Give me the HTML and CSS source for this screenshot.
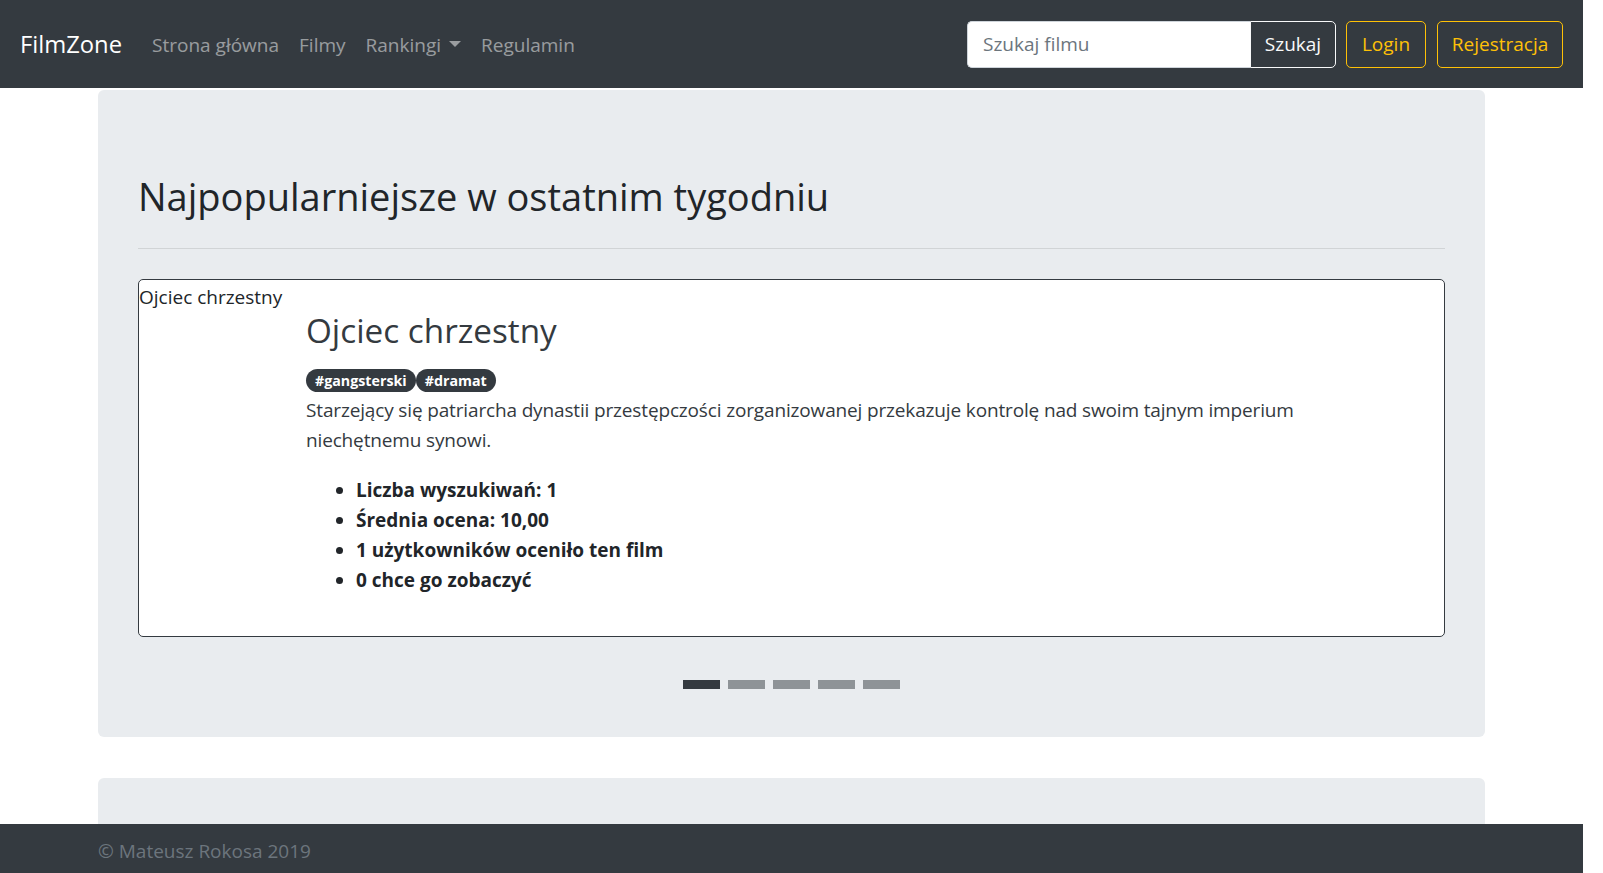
FILE: index.html
```html
<!DOCTYPE html>
<html lang="pl">
<head>
<meta charset="utf-8">
<title>FilmZone</title>
<link rel="stylesheet" href="styles.css">
</head>
<body>
<div class="page">
  <nav class="navbar">
    <div class="nav-left">
      <a class="brand" href="#">FilmZone</a>
      <ul class="nav">
        <li><a class="nav-link" href="#">Strona główna</a></li>
        <li><a class="nav-link" href="#">Filmy</a></li>
        <li><a class="nav-link" href="#">Rankingi<span class="caret"></span></a></li>
        <li><a class="nav-link" href="#">Regulamin</a></li>
      </ul>
    </div>
    <form class="nav-right">
      <div class="input-group">
        <input class="search-input" type="text" placeholder="Szukaj filmu">
        <button class="btn btn-search" type="button">Szukaj</button>
      </div>
      <button class="btn btn-warning btn-login" type="button">Login</button>
      <button class="btn btn-warning btn-register" type="button">Rejestracja</button>
    </form>
  </nav>

  <main class="main">
    <section class="jumbotron">
      <h2 class="section-title">Najpopularniejsze w ostatnim tygodniu</h2>
      <hr class="divider">
      <div class="card">
        <div class="poster">Ojciec chrzestny</div>
        <div class="media-body">
          <h3 class="film-title">Ojciec chrzestny</h3>
          <div class="tags"><span class="badge">#gangsterski</span><span class="badge">#dramat</span></div>
          <p class="desc">Starzejący się patriarcha dynastii przestępczości zorganizowanej przekazuje kontrolę nad swoim tajnym imperium niechętnemu synowi.</p>
          <ul class="stats">
            <li>Liczba wyszukiwań: 1</li>
            <li>Średnia ocena: 10,00</li>
            <li>1 użytkowników oceniło ten film</li>
            <li>0 chce go zobaczyć</li>
          </ul>
        </div>
      </div>
      <ol class="indicators">
        <li class="active"></li>
        <li></li>
        <li></li>
        <li></li>
        <li></li>
      </ol>
    </section>
    <section class="jumbotron jumbotron-next"></section>
  </main>

  <footer class="footer">© Mateusz Rokosa 2019</footer>
</div>
</body>
</html>
```

FILE: styles.css
```css
html, body {
  margin: 0;
  padding: 0;
  overflow: hidden;
}

body {
  font-family: "Segoe UI", "Open Sans", "Noto Sans", sans-serif;
  font-size: 19px;
  line-height: 30px;
  color: #212529;
  background: #fff;
}

.page {
  width: 1583px;
}

/* Navbar */
.navbar {
  box-sizing: border-box;
  height: 88px;
  padding: 0 20px;
  background: #343a40;
  display: flex;
  align-items: center;
  justify-content: space-between;
}

.nav-left {
  display: flex;
  align-items: center;
}

.brand {
  font-size: 23.75px;
  line-height: 37.5px;
  padding-top: 2px;
  color: #fff;
  text-decoration: none;
  margin-right: 20px;
}

.nav {
  display: flex;
  list-style: none;
  margin: 0;
  padding: 0;
}

.nav-link {
  display: block;
  padding: 11px 10px 9px;
  color: rgba(255, 255, 255, 0.5);
  text-decoration: none;
}

.caret {
  display: inline-block;
  margin-left: 8px;
  vertical-align: 5px;
  border-top: 6px solid;
  border-right: 6px solid transparent;
  border-left: 6px solid transparent;
}

.nav-right {
  display: flex;
  align-items: center;
  margin: 0;
}

.input-group {
  display: flex;
  margin-right: 10px;
}

.search-input {
  box-sizing: border-box;
  width: 283px;
  height: 47px;
  padding: 7.5px 15px;
  font-family: inherit;
  font-size: 19px;
  color: #495057;
  background: #fff;
  border: 1px solid #ced4da;
  border-right: 0;
  border-radius: 5px 0 0 5px;
  outline: none;
}

.search-input::placeholder {
  color: #6c757d;
}

.btn {
  box-sizing: border-box;
  height: 47px;
  padding: 7.5px 0;
  font-family: inherit;
  font-size: 19px;
  line-height: 30px;
  background: transparent;
  border-radius: 5px;
  text-align: center;
}

.btn-search {
  width: 86px;
  color: #f8f9fa;
  border: 1px solid #f8f9fa;
  border-radius: 0 5px 5px 0;
}

.btn-warning {
  color: #ffc107;
  border: 1px solid #ffc107;
}

.btn-login {
  width: 80px;
  margin-right: 11px;
}

.btn-register {
  width: 126px;
}

/* Main */
.main {
  padding: 2px 98px 0;
}

.jumbotron {
  background: #e9ecef;
  border-radius: 6px;
  padding: 80px 40px 48px;
  margin-bottom: 41px;
}

.jumbotron-next {
  height: 200px;
  padding: 0;
}

.section-title {
  font-size: 38px;
  font-weight: 400;
  line-height: 48px;
  margin: 2px 0 0;
  color: #212529;
}

.divider {
  margin: 28px 0 30px;
  border: 0;
  border-top: 1px solid rgba(0, 0, 0, 0.1);
}

.card {
  display: flex;
  height: 356px;
  background: #fff;
  border: 1px solid #343a40;
  border-radius: 5px;
}

.poster {
  width: 147px;
  margin-right: 20px;
  padding-top: 2px;
  white-space: nowrap;
}

.media-body {
  flex: 1;
  padding: 29px 60px 0 0;
  color: #343a40;
}

.film-title {
  font-size: 33.25px;
  font-weight: 400;
  line-height: 42px;
  margin: 0 0 10px;
}

.tags {
  display: flex;
  padding-top: 8px;
  margin-bottom: 3px;
}

.badge {
  display: inline-block;
  padding: 4px 9px;
  font-size: 14.25px;
  font-weight: 700;
  line-height: 15px;
  color: #fff;
  background: #343a40;
  border-radius: 10rem;
}

.desc {
  margin: 0 0 20px;
  letter-spacing: -0.15px;
}

.stats {
  margin: 0;
  padding-left: 50px;
  font-weight: 700;
  color: #212529;
}

/* Carousel indicators */
.indicators {
  display: flex;
  justify-content: center;
  gap: 8px;
  list-style: none;
  margin: 43px 0 0;
  padding: 0;
}

.indicators li {
  width: 37px;
  height: 9px;
  background: #343a40;
  opacity: 0.5;
}

.indicators li.active {
  opacity: 1;
}

/* Footer */
.footer {
  position: fixed;
  left: 0;
  bottom: 0;
  box-sizing: border-box;
  width: 1583px;
  height: 49px;
  padding: 12px 98px 0;
  background: #343a40;
  color: #6c757d;
}
```
